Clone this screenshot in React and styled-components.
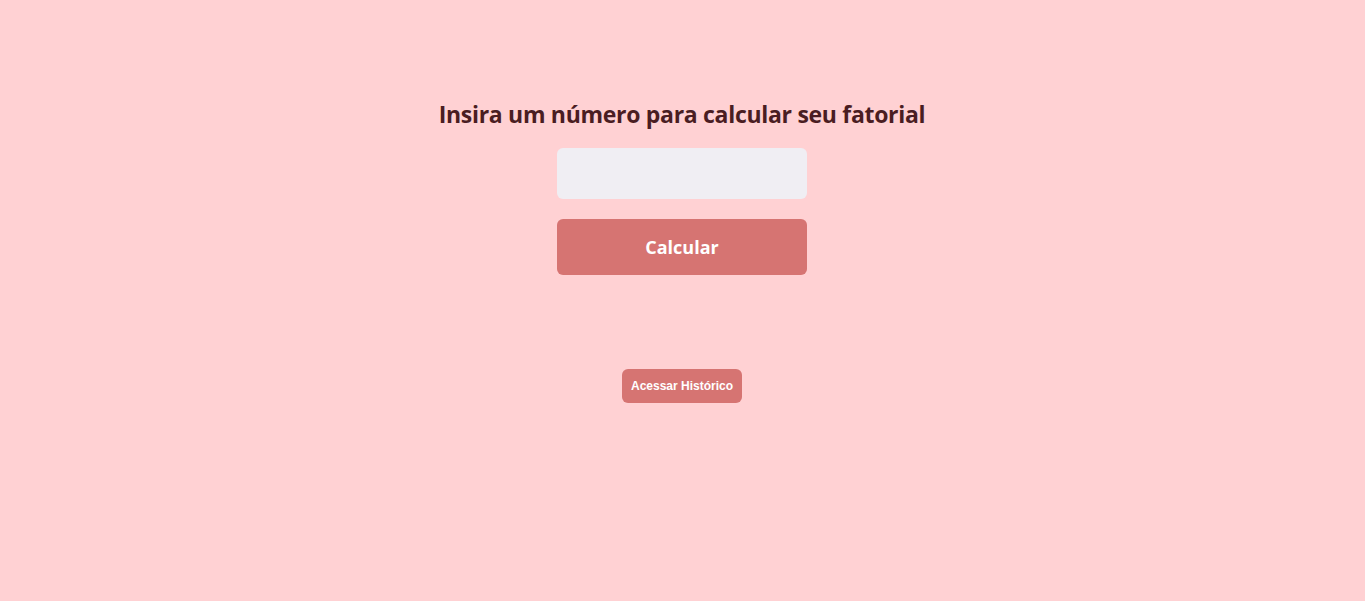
import styled, { createGlobalStyle } from "styled-components";

const Global = createGlobalStyle`
  body {
    margin: 0;
    background: #ffd1d3;
  }
`;

const Page = styled.main`
  display: flex;
  flex-direction: column;
  align-items: center;
  min-height: 100vh;
  padding: 100px 1px 0 0;
  box-sizing: border-box;
  font-family: "Open Sans", "DejaVu Sans", sans-serif;
`;

const Title = styled.h1`
  margin: 0 0 20px;
  font-size: 23px;
  line-height: 28px;
  font-weight: 700;
  color: #4a1d22;
  letter-spacing: -0.3px;
`;

const Form = styled.form`
  display: flex;
  flex-direction: column;
  gap: 20px;
  width: 250px;
`;

const Input = styled.input`
  height: 51px;
  border: none;
  border-radius: 6px;
  background: #f0eef3;
  padding: 0 12px;
  box-sizing: border-box;
  font-size: 16px;
  outline: none;
`;

const Submit = styled.button`
  height: 56px;
  border: none;
  border-radius: 6px;
  background: #d67472;
  color: #fff;
  font-family: "Open Sans", sans-serif;
  font-weight: 700;
  font-size: 18px;
  cursor: pointer;
`;

const HistoryButton = styled.button`
  margin-top: 94px;
  height: 34px;
  padding: 0 9px;
  border: none;
  border-radius: 6px;
  background: #d67472;
  color: #fff;
  font-family: "Liberation Sans", Arial, sans-serif;
  font-weight: 700;
  font-size: 12px;
  cursor: pointer;
`;

export default function App() {
  return (
    <>
      <Global />
      <Page>
        <Title>Insira um número para calcular seu fatorial</Title>
        <Form onSubmit={(e) => e.preventDefault()}>
          <Input type="number" />
          <Submit type="submit">Calcular</Submit>
        </Form>
        <HistoryButton type="button">Acessar Histórico</HistoryButton>
      </Page>
    </>
  );
}
